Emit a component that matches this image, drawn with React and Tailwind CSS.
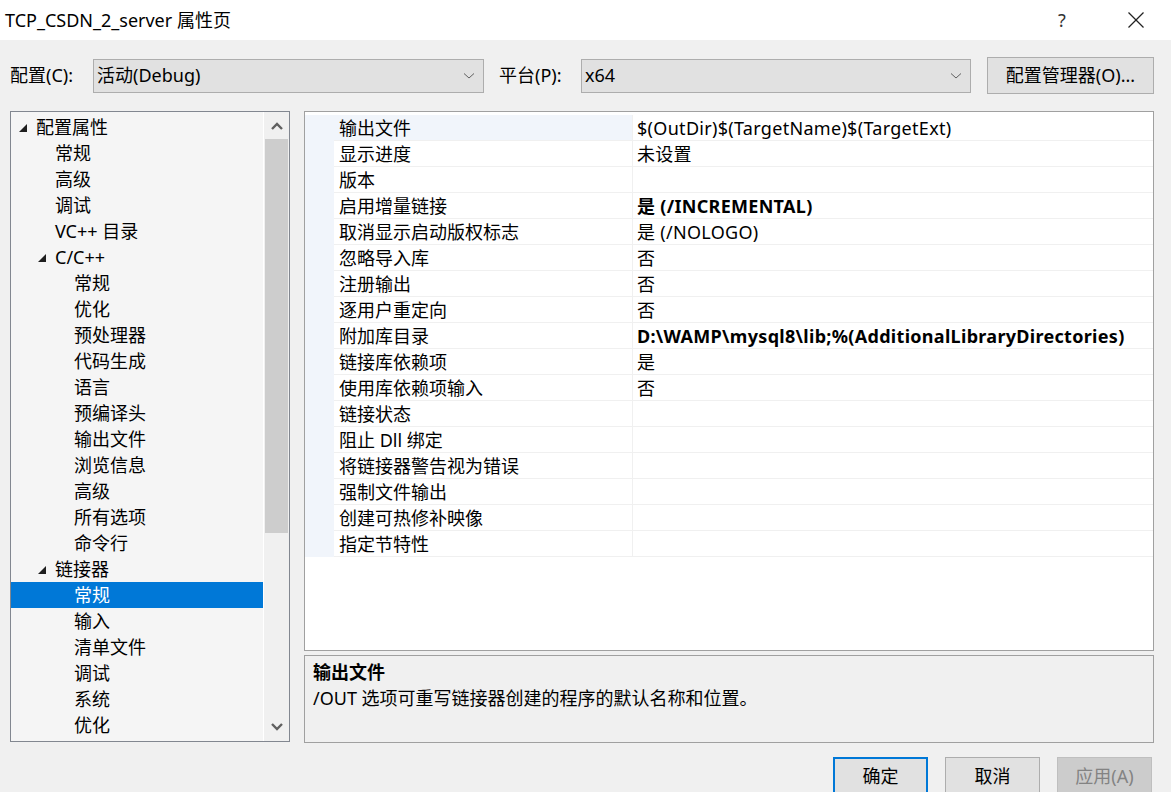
import React from 'react';

const FONT = { fontFamily: '"Noto Sans", "Noto Sans CJK SC", sans-serif' };

const treeItems = [
  { label: '配置属性', level: 0, open: true },
  { label: '常规', level: 1 },
  { label: '高级', level: 1 },
  { label: '调试', level: 1 },
  { label: 'VC++ 目录', level: 1 },
  { label: 'C/C++', level: 1, open: true },
  { label: '常规', level: 2 },
  { label: '优化', level: 2 },
  { label: '预处理器', level: 2 },
  { label: '代码生成', level: 2 },
  { label: '语言', level: 2 },
  { label: '预编译头', level: 2 },
  { label: '输出文件', level: 2 },
  { label: '浏览信息', level: 2 },
  { label: '高级', level: 2 },
  { label: '所有选项', level: 2 },
  { label: '命令行', level: 2 },
  { label: '链接器', level: 1, open: true },
  { label: '常规', level: 2, selected: true },
  { label: '输入', level: 2 },
  { label: '清单文件', level: 2 },
  { label: '调试', level: 2 },
  { label: '系统', level: 2 },
  { label: '优化', level: 2 },
];

const props = [
  ['输出文件', '$(OutDir)$(TargetName)$(TargetExt)'],
  ['显示进度', '未设置'],
  ['版本', ''],
  ['启用增量链接', '是 (/INCREMENTAL)', true],
  ['取消显示启动版权标志', '是 (/NOLOGO)'],
  ['忽略导入库', '否'],
  ['注册输出', '否'],
  ['逐用户重定向', '否'],
  ['附加库目录', 'D:\\WAMP\\mysql8\\lib;%(AdditionalLibraryDirectories)', true],
  ['链接库依赖项', '是'],
  ['使用库依赖项输入', '否'],
  ['链接状态', ''],
  ['阻止 Dll 绑定', ''],
  ['将链接器警告视为错误', ''],
  ['强制文件输出', ''],
  ['创建可热修补映像', ''],
  ['指定节特性', ''],
];

const Chevron = () => (
  <svg width="12" height="8" viewBox="0 0 12 8" className="mr-[8px]">
    <polyline points="1,1.5 6,6 11,1.5" fill="none" stroke="#606060" strokeWidth="1" />
  </svg>
);

const Select = ({ value, width }) => (
  <div className={`h-[34px] border border-[#adadad] bg-[#e1e1e1] flex items-center justify-between ${width}`}>
    <span className="pl-[3px] text-[18px] text-black">{value}</span>
    <Chevron />
  </div>
);

const Tri = () => (
  <svg width="8" height="8" viewBox="0 0 8 8">
    <polygon points="8,0 8,8 0,8" fill="#1e1e1e" />
  </svg>
);

export default function App() {
  return (
    <div style={FONT} className="w-[1171px] h-[792px] bg-[#f0f0f0] overflow-hidden text-black">
      {/* title bar */}
      <div className="h-[40px] bg-white flex items-center justify-between">
        <span className="pl-[5px] text-[18px]">TCP_CSDN_2_server 属性页</span>
        <div className="flex items-center">
          <span className="text-[18px] text-[#333] w-[20px] mr-[50px]">?</span>
          <svg width="16" height="16" viewBox="0 0 16 16" className="mr-[27px]">
            <line x1="0.5" y1="0.5" x2="15.5" y2="15.5" stroke="#222" strokeWidth="1.2" />
            <line x1="15.5" y1="0.5" x2="0.5" y2="15.5" stroke="#222" strokeWidth="1.2" />
          </svg>
        </div>
      </div>

      {/* config row */}
      <div className="flex items-center h-[37px] mt-[17px] pl-[10px]">
        <span className="text-[18px] w-[83px]">配置(C):</span>
        <Select value="活动(Debug)" width="w-[391px]" />
        <span className="text-[18px] ml-[15px] w-[82px]">平台(P):</span>
        <Select value="x64" width="w-[390px]" />
        <div className="ml-[16px] w-[167px] h-[37px] border border-[#adadad] bg-[#e1e1e1] flex items-center justify-center text-[18px]">
          配置管理器(O)...
        </div>
      </div>

      {/* main */}
      <div className="flex mt-[17px] pl-[10px]">
        {/* tree */}
        <div className="w-[280px] h-[631px] border border-[#828790] bg-[#f5f5f5] flex">
          <div className="flex-1 pt-[2px] overflow-hidden">
            {treeItems.map((it, i) => (
              <div
                key={i}
                className={`h-[26px] flex items-center relative text-[18px] leading-[26px] ${it.selected ? 'bg-[#0078d7] text-white' : ''}`}
                style={{ paddingLeft: 25 + it.level * 19 }}
              >
                {it.open && (
                  <span className="absolute top-[10px]" style={{ left: 8 + it.level * 19 }}>
                    <Tri />
                  </span>
                )}
                {it.label}
              </div>
            ))}
          </div>
          <div className="w-[26px] bg-[#f0f0f0] border-l border-[#ffffff] flex flex-col">
            <div className="h-[27px] flex items-center justify-center">
              <svg width="12" height="8" viewBox="0 0 12 8">
                <polyline points="1,7 6,2 11,7" fill="none" stroke="#606060" strokeWidth="2.4" />
              </svg>
            </div>
            <div className="mx-[1px] h-[394px] bg-[#cdcdcd]" />
            <div className="flex-1" />
            <div className="h-[28px] flex items-center justify-center">
              <svg width="12" height="8" viewBox="0 0 12 8">
                <polyline points="1,1 6,6 11,1" fill="none" stroke="#606060" strokeWidth="2.4" />
              </svg>
            </div>
          </div>
        </div>

        {/* right side */}
        <div className="ml-[14px] w-[850px] flex flex-col">
          <div className="h-[540px] border border-[#a0a0a0] bg-white pt-[3px]">
            {props.map(([name, value, bold], i) => (
              <div key={i} className="flex h-[26px] text-[18px] leading-[27px]">
                <div className="w-[29px] bg-[#f1f5fb]" />
                <div className={`w-[298px] pl-[5px] border-b border-[#f0f0f0] ${i === 0 ? 'bg-[#f1f5fb]' : ''}`}>{name}</div>
                <div className={`flex-1 pl-[4px] border-l border-b border-[#f0f0f0] whitespace-nowrap tracking-[0.3px] ${bold ? 'font-bold' : ''}`}>{value}</div>
              </div>
            ))}
          </div>
          <div className="mt-[4px] h-[88px] border border-[#a0a0a0] bg-[#f0f0f0] pl-[8px] pt-[3px]">
            <div className="text-[18px] font-bold leading-[26px]">输出文件</div>
            <div className="text-[18px] leading-[26px]">/OUT 选项可重写链接器创建的程序的默认名称和位置。</div>
          </div>
        </div>
      </div>

      {/* buttons */}
      <div className="flex justify-end gap-[17px] pr-[19px] mt-[14px]">
        <div className="w-[95px] h-[38px] border-2 border-[#0078d7] bg-[#e1e1e1] flex items-center justify-center text-[18px]">确定</div>
        <div className="w-[95px] h-[38px] border border-[#adadad] bg-[#e1e1e1] flex items-center justify-center text-[18px]">取消</div>
        <div className="w-[95px] h-[38px] border border-[#bfbfbf] bg-[#cccccc] flex items-center justify-center text-[18px] text-[#838383]">应用(A)</div>
      </div>
    </div>
  );
}
